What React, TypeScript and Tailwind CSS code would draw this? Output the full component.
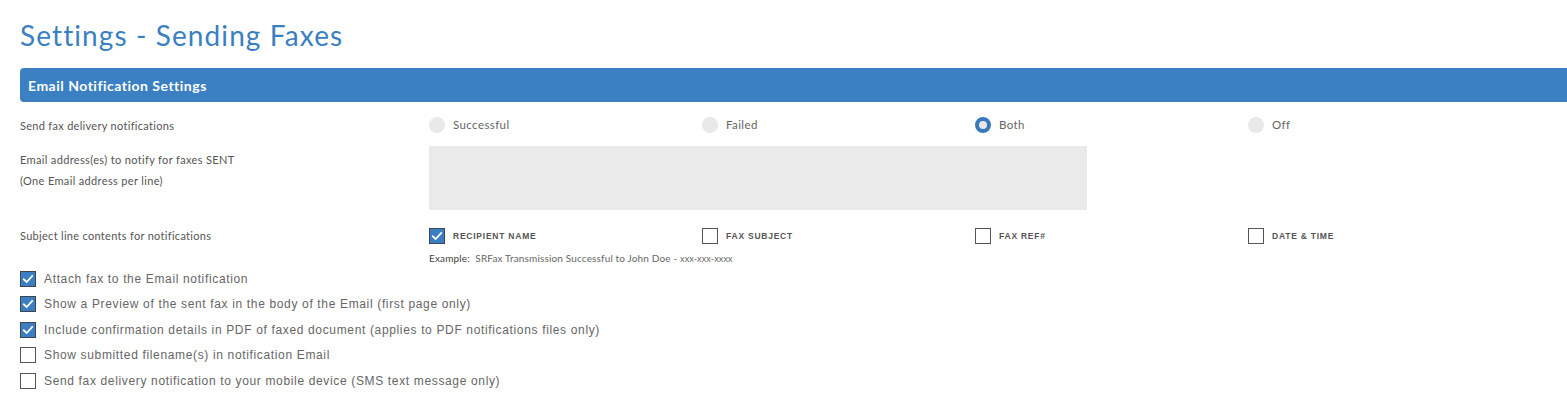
import React from 'react';

const SANS = { fontFamily: 'Lato, "Noto Sans", sans-serif' };

function Radio({ checked, label }: { checked?: boolean; label: string }) {
  return (
    <div className="flex items-center gap-[8px]">
      {checked ? (
        <span className="w-[16px] h-[16px] rounded-full border-[4px] border-[#3a78bd] bg-[#e8e8e8] shrink-0" />
      ) : (
        <span className="w-[16px] h-[16px] rounded-full bg-[#e9e9e9] shrink-0" />
      )}
      <span className="text-[11.5px] tracking-[0.4px] text-[#666]">{label}</span>
    </div>
  );
}

function Box({ checked }: { checked?: boolean }) {
  return checked ? (
    <span className="w-[16px] h-[16px] bg-[#3b7fc2] border border-[#3d4650] flex items-center justify-center shrink-0">
      <svg viewBox="0 0 16 16" className="w-[12px] h-[12px]">
        <path d="M2.5 8.5 L6.2 12 L13.5 4" fill="none" stroke="#fff" strokeWidth="2.4" strokeLinecap="square" />
      </svg>
    </span>
  ) : (
    <span className="w-[16px] h-[16px] bg-white border border-[#555] shrink-0" />
  );
}

function CapCheck({ checked, label }: { checked?: boolean; label: string }) {
  return (
    <div className="flex items-center gap-[8px]">
      <Box checked={checked} />
      <span
        className="text-[8.5px] font-bold tracking-[0.09em] text-[#555]"
        style={{ fontFamily: '"Liberation Sans", Arial, sans-serif' }}
      >
        {label}
      </span>
    </div>
  );
}

const OPTIONS = [
  { checked: true, label: 'Attach fax to the Email notification' },
  { checked: true, label: 'Show a Preview of the sent fax in the body of the Email (first page only)' },
  { checked: true, label: 'Include confirmation details in PDF of faxed document (applies to PDF notifications files only)' },
  { checked: false, label: 'Show submitted filename(s) in notification Email' },
  { checked: false, label: 'Send fax delivery notification to your mobile device (SMS text message only)' },
];

export default function App() {
  return (
    <div className="min-h-screen bg-white pl-[20px] overflow-hidden" style={SANS}>
      <h1 className="pt-[17px] h-[53px] text-[28px] leading-[36px] tracking-[1.1px] text-[#3a7fc1] font-normal">
        Settings - Sending Faxes
      </h1>

      <div className="mt-[15px] h-[34px] bg-[#3a80c2] rounded-l-[4px] flex items-center pl-[8px]">
        <span className="text-white font-bold text-[14px] tracking-[0.5px]">Email Notification Settings</span>
      </div>

      {/* delivery notifications */}
      <div className="mt-[11px] h-[24px] flex items-center">
        <div className="w-[409px] text-[11px] tracking-[0.3px] text-[#555] pt-[3px]">Send fax delivery notifications</div>
        <div className="grid grid-cols-[273px_273px_273px_273px]">
          <Radio label="Successful" />
          <Radio label="Failed" />
          <Radio checked label="Both" />
          <Radio label="Off" />
        </div>
      </div>

      {/* email list */}
      <div className="mt-[9px] flex">
        <div className="w-[409px] text-[11px] leading-[21px] tracking-[0.35px] text-[#555] pt-[3px]">
          <div>Email address(es) to notify for faxes SENT</div>
          <div>(One Email address per line)</div>
        </div>
        <textarea className="w-[658px] h-[64px] bg-[#eaeaea] resize-none outline-none" />
      </div>

      {/* subject line */}
      <div className="mt-[18px] h-[16px] flex items-center">
        <div className="w-[409px] text-[11px] tracking-[0.3px] text-[#555] pt-[1px]">Subject line contents for notifications</div>
        <div className="grid grid-cols-[273px_273px_273px_273px]">
          <CapCheck checked label="RECIPIENT NAME" />
          <CapCheck label="FAX SUBJECT" />
          <CapCheck label="FAX REF#" />
          <CapCheck label="DATE & TIME" />
        </div>
      </div>
      <div className="mt-[8px] ml-[409px] h-[12px] text-[10px] leading-[12px] tracking-[0.15px] text-[#666]">
        <span className="text-[#444]">Example:</span>&nbsp; SRFax Transmission Successful to John Doe -{' '}
        <span className="text-[9px]">xxx-xxx-xxxx</span>
      </div>

      {/* options */}
      <div className="mt-[2px] flex flex-col">
        {OPTIONS.map(o => (
          <div key={o.label} className="h-[25.5px] flex items-center gap-[8px]">
            <Box checked={o.checked} />
            <span
              className="text-[12px] tracking-[0.65px] text-[#666]"
              style={{ fontFamily: '"Liberation Sans", Arial, sans-serif' }}
            >
              {o.label}
            </span>
          </div>
        ))}
      </div>
    </div>
  );
}
